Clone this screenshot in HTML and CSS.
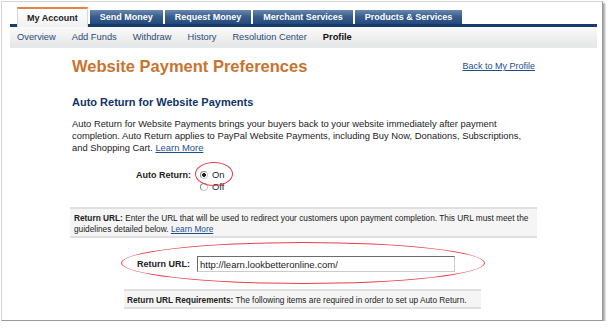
FILE: index.html
```html
<!DOCTYPE html>
<html lang="en">
<head>
    <meta charset="UTF-8">
    <title>Website Payment Preferences</title>
    <link rel="stylesheet" href="styles.css">
</head>
<body>
    <div class="page">
        <div class="tabs">
            <a class="tab active">My Account</a>
            <a class="tab">Send Money</a>
            <a class="tab">Request Money</a>
            <a class="tab">Merchant Services</a>
            <a class="tab">Products &amp; Services</a>
        </div>
        <div class="subnav">
            <a>Overview</a>
            <a>Add Funds</a>
            <a>Withdraw</a>
            <a>History</a>
            <a>Resolution Center</a>
            <a class="current">Profile</a>
        </div>

        <div class="content">
            <div class="page-head">
                <h1>Website Payment Preferences</h1>
                <a class="link back">Back to My Profile</a>
            </div>

            <h2>Auto Return for Website Payments</h2>
            <p class="intro">Auto Return for Website Payments brings your buyers back to your website immediately after payment completion. Auto Return applies to PayPal Website Payments, including Buy Now, Donations, Subscriptions, and Shopping Cart. <a class="link">Learn More</a></p>

            <div class="field-row auto-return">
                <div class="label">Auto Return:</div>
                <div class="radios">
                    <label><input type="radio" name="autoreturn" checked> On</label>
                    <label><input type="radio" name="autoreturn"> Off</label>
                </div>
            </div>

            <div class="note">
                <b>Return URL:</b> Enter the URL that will be used to redirect your customers upon payment completion. This URL must meet the guidelines detailed below. <a class="link">Learn More</a>
            </div>

            <div class="field-row url-row">
                <div class="label">Return URL:</div>
                <input class="url-input" type="text" value="http://learn.lookbetteronline.com/">
            </div>

            <div class="note requirements">
                <b>Return URL Requirements:</b> The following items are required in order to set up Auto Return.
            </div>
        </div>

        <!-- hand drawn highlight marks -->
        <div class="mark mark-on"></div>
        <div class="mark mark-url"></div>
    </div>
</body>
</html>
```

FILE: styles.css
```css
body {
    margin: 0;
    background: #fff;
    font-family: "Liberation Sans", Arial, sans-serif;
    font-size: 9.4px;
    color: #222;
}
a {
    text-decoration: none;
}
.page {
    position: relative;
    width: 600px;
    height: 318px;
    margin: 1px 0 0 1px;
    border: 1px solid #d4d4d4;
    border-right-color: #999;
    border-bottom-color: #999;
    box-shadow: 2px 2px 2px rgba(0,0,0,0.35);
    background: #fff;
}

/* tabs */
.tabs {
    display: flex;
    align-items: flex-end;
    gap: 2px;
    height: 17px;
    margin: 5px 5px 0 8px;
    padding-left: 7px;
    border-bottom: 3px solid #173d6e;
}
.tab {
    height: 14px;
    line-height: 14px;
    padding: 0 10px;
    font-weight: bold;
    font-size: 9px;
    color: #fff;
    background: linear-gradient(to bottom, #6a88ae 0%, #3a5f8f 45%, #24497a 100%);
}
.tab.active {
    height: 18px;
    line-height: 19px;
    margin-bottom: -3px;
    padding: 0 9px;
    color: #222;
    background: linear-gradient(to bottom, #fff, #f1f1f1);
    border-top: 2px solid #e2834a;
    border-left: 1px solid #d8d8d8;
    border-right: 1px solid #d8d8d8;
}

/* second level nav */
.subnav {
    display: flex;
    gap: 16px;
    height: 20px;
    line-height: 20px;
    margin: 0 5px 0 8px;
    padding-left: 7px;
    font-size: 9.3px;
    background: linear-gradient(to bottom, #fafafa, #e6e6e6);
    border-bottom: 1px solid #e4eaf2;
}
.subnav a {
    color: #2b4b75;
}
.subnav .current {
    color: #111;
    font-weight: bold;
}

/* main content */
.content {
    width: 467px;
    margin-left: 68px;
}
.page-head {
    display: flex;
    justify-content: space-between;
    align-items: center;
    margin-top: 8px;
    padding: 0 2px;
}
h1 {
    margin: 0;
    font-size: 16.5px;
    line-height: 20px;
    color: #c9732f;
}
.link {
    color: #1d4f8c;
    text-decoration: underline;
}
.back {
    font-size: 9px;
}
h2 {
    margin: 19px 0 0;
    padding: 0 2px;
    font-size: 11px;
    line-height: 14px;
    color: #0f3466;
}
.intro {
    margin: 9px 0 0;
    padding: 0 2px;
    line-height: 12px;
}

/* form rows */
.field-row {
    display: grid;
    grid-template-columns: 121px auto;
    column-gap: 9px;
}
.label {
    text-align: right;
    font-weight: bold;
    font-size: 9px;
}
.auto-return {
    margin-top: 15px;
    line-height: 12px;
}
.radios {
    display: flex;
    flex-direction: column;
}
.radios label {
    display: flex;
    align-items: center;
    gap: 4px;
    height: 12px;
    font-size: 9.4px;
}
.radios input {
    appearance: none;
    width: 8px;
    height: 8px;
    margin: 0;
    border: 1px solid #888;
    border-right-color: #ccc;
    border-bottom-color: #ccc;
    border-radius: 50%;
    background: #fff;
}
.radios input:checked {
    background: radial-gradient(circle, #222 0 1.6px, #fff 2.2px);
}

.note {
    margin-top: 14px;
    padding: 4px 3px 1px 4px;
    font-size: 8.3px;
    line-height: 11px;
    color: #222;
    background: #f5f5f5;
    border-top: 2px solid #dfdfdf;
    border-bottom: 2px solid #dfdfdf;
}

.url-row {
    grid-template-columns: 120px auto;
    column-gap: 7px;
    align-items: center;
    margin-top: 18px;
}
.url-input {
    box-sizing: border-box;
    width: 258px;
    height: 16px;
    padding: 0 2px;
    font-family: "Liberation Sans", Arial, sans-serif;
    font-size: 9.5px;
    color: #222;
    border: 1px solid #ccc;
    border-top-color: #6c6c6c;
    border-left-color: #6c6c6c;
    outline: none;
}
.requirements {
    width: 351px;
    margin: 17px 0 0 54px;
    padding-left: 3px;
}

/* red ellipses drawn over the screenshot */
.mark {
    position: absolute;
    border: 1.5px solid #e6404a;
    border-radius: 50%;
}
.mark-on {
    left: 193px;
    top: 160px;
    width: 36px;
    height: 22px;
}
.mark-url {
    left: 119px;
    top: 240px;
    width: 362px;
    height: 40px;
}
```
